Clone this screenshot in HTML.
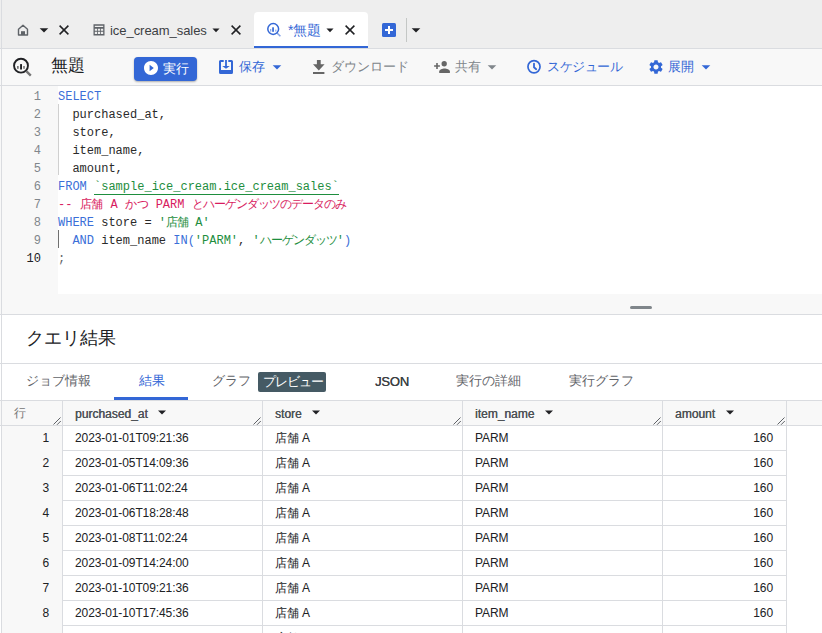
<!DOCTYPE html>
<html><head><meta charset="utf-8">
<style>
*{margin:0;padding:0;box-sizing:border-box}
html,body{width:822px;height:633px;overflow:hidden;background:#fff;font-family:"Liberation Sans",sans-serif;color:#202124}
.a{position:absolute}
svg{display:block}
#tabbar{left:0;top:0;width:822px;height:49px;background:#eeeeee;border-bottom:1px solid #dadce0}
#lb{left:1px;top:0;width:1px;height:633px;background:#dadce0;z-index:50}
.t{font-size:14px;white-space:nowrap;line-height:16px}
#toolbar{left:0;top:49px;width:822px;height:37px;background:#f8f8f8;border-bottom:1px solid #dadce0}
#gutter{left:0;top:86px;width:58px;height:208px;background:#f8f8f8}
#code{left:58px;top:86px;width:764px;height:208px;background:#fff}
#split{left:0;top:294px;width:822px;height:21px;background:#f8f8f8;border-bottom:1px solid #dadce0}
.ln{position:absolute;left:0;width:41px;text-align:right;font-family:"Liberation Mono",monospace;font-size:12px;line-height:18px;color:#80868b}
.cl{position:absolute;left:58px;font-family:"Liberation Mono",monospace;font-size:12px;line-height:18px;white-space:pre;color:#2a2a2a}
.cj{letter-spacing:-1px}.cj2{letter-spacing:-0.2px}
.kw{color:#3b6fd8}.str{color:#1e8e3e}.cm{color:#d81b60}.pn{color:#5f6368}
.hd{position:absolute;top:400px;height:26px;background:#f8f8f8;border-top:1px solid #dadce0;border-bottom:1px solid #dadce0}
.vs{position:absolute;top:400px;width:1px;height:26px;background:#dadce0}
.hc{position:absolute;top:400px;height:24px;font-size:12px;color:#4d5156;line-height:24px;text-shadow:0.35px 0 0 #4d5156}
.row{position:absolute;left:1px;width:786px;height:25px;border-bottom:1px solid #dadce0}
.c{position:absolute;top:0;height:25px;border-right:1px solid #dadce0;font-size:12px;line-height:24px;color:#202124;white-space:nowrap;letter-spacing:-0.1px}
</style></head><body>
<div id="lb" class="a"></div>
<div id="tabbar" class="a"></div>
<!-- home tab -->
<svg class="a" style="left:17px;top:24px" width="12" height="12" viewBox="0 0 12 12"><path d="M1.5 11V5.2L6 1.2l4.5 4V11z" fill="none" stroke="#5f6368" stroke-width="1.4" stroke-linejoin="round"/><rect x="4" y="7.2" width="4" height="3.8" fill="#5f6368"/></svg>
<svg class="a" style="left:38px;top:22px" width="12" height="16" viewBox="5 4 14 16"><path fill="#202124" d="M7 10l5 5 5-5z"/></svg>
<svg class="a" style="left:59px;top:25px" width="10" height="10" viewBox="0 0 10 10"><path d="M.6 .6L9.4 9.4M9.4 .6L.6 9.4" stroke="#202124" stroke-width="1.5"/></svg>
<!-- ice cream tab -->
<svg class="a" style="left:93px;top:24px" width="12" height="12" viewBox="0 0 12 12"><path fill="#5f6368" d="M.5 .3h11v11.2H.5zM1.8 1.8v1.3h8.4V1.8zM1.8 4.8v1.9h2.3V4.8zm3.1 0v1.9h2.2V4.8zm3 0v1.9h2.3V4.8zM1.8 7.7v2.2h2.3V7.7zm3.1 0v2.2h2.2V7.7zm3 0v2.2h2.3V7.7z"/></svg>
<div class="a t" style="left:110px;top:23px;color:#3c4043;font-size:13px;letter-spacing:-0.05px">ice_cream_sales</div>
<svg class="a" style="left:211px;top:22px" width="10" height="16" viewBox="5 4 14 16"><path fill="#202124" d="M7 10l5 5 5-5z"/></svg>
<svg class="a" style="left:231px;top:25px" width="10" height="10" viewBox="0 0 10 10"><path d="M.6 .6L9.4 9.4M9.4 .6L.6 9.4" stroke="#202124" stroke-width="1.5"/></svg>
<!-- active tab -->
<div class="a" style="left:254px;top:12px;width:114px;height:36px;background:#fff;border-radius:4px 4px 0 0"></div>
<div class="a" style="left:254px;top:46px;width:114px;height:2px;background:#3367d6"></div>
<svg class="a" style="left:266px;top:22px" width="16" height="16" viewBox="0 0 16 16"><circle cx="7.2" cy="7" r="5.4" fill="none" stroke="#3367d6" stroke-width="1.5"/><path d="M11 11l3.4 3.3" stroke="#3367d6" stroke-opacity=".6" stroke-width="1.6"/><rect x="6.2" y="5.3" width="1.7" height="4.5" fill="#3367d6"/><rect x="4" y="7" width="1.3" height="2.6" fill="#3367d6" fill-opacity=".55"/><rect x="9.2" y="7.6" width="1.2" height="2" fill="#3367d6" fill-opacity=".55"/></svg>
<div class="a t" style="left:288px;top:22px;color:#3367d6">*無題</div>
<svg class="a" style="left:325px;top:22px" width="10" height="16" viewBox="5 4 14 16"><path fill="#202124" d="M7 10l5 5 5-5z"/></svg>
<svg class="a" style="left:345px;top:25px" width="10" height="10" viewBox="0 0 10 10"><path d="M.6 .6L9.4 9.4M9.4 .6L.6 9.4" stroke="#202124" stroke-width="1.5"/></svg>
<!-- plus -->
<svg class="a" style="left:382px;top:23px" width="14" height="14" viewBox="0 0 14 14"><rect width="14" height="14" rx="1.5" fill="#3367d6"/><path d="M6 3h2v3h3v2H8v3H6V8H3V6h3z" fill="#fff"/></svg>
<div class="a" style="left:406px;top:18px;width:1px;height:24px;background:#c4c7c5"></div>
<svg class="a" style="left:410px;top:22px" width="12" height="16" viewBox="5 4 14 16"><path fill="#202124" d="M7 10l5 5 5-5z"/></svg>

<!-- toolbar -->
<div id="toolbar" class="a"></div>
<svg class="a" style="left:8px;top:52px" width="32" height="30" viewBox="0 0 32 30"><circle cx="13" cy="13.65" r="6.95" fill="none" stroke="#202124" stroke-width="1.9"/><path d="M18.3 19.1L22.8 23.6" stroke="#757575" stroke-width="2.4"/><rect x="12.1" y="12.1" width="1.9" height="5.4" fill="#202124"/><rect x="9" y="14" width="1.7" height="2.8" fill="#777"/><rect x="15.2" y="14" width="1.6" height="2.8" fill="#777"/></svg>
<div class="a" style="left:51px;top:56px;font-size:17px;line-height:20px;color:#202124">無題</div>
<div class="a" style="left:134px;top:57px;width:63px;height:24px;background:#3367d6;border-radius:4px;box-shadow:0 1px 2px rgba(0,0,0,.3)"></div>
<svg class="a" style="left:144px;top:61px" width="14" height="14" viewBox="2 2 20 20"><path fill="#fff" d="M12 2C6.48 2 2 6.48 2 12s4.48 10 10 10 10-4.48 10-10S17.52 2 12 2zm-2 14.5v-9l6 4.5-6 4.5z"/></svg>
<div class="a t" style="left:163px;top:61px;color:#fff;font-size:13px">実行</div>
<svg class="a" style="left:219px;top:60px" width="14" height="14" viewBox="0 0 14 14"><path fill="#3367d6" d="M0 1.5Q0 0 1.5 0H4.7V2H2V10H12V2H9.3V0H12.5Q14 0 14 1.5V12.5Q14 14 12.5 14H1.5Q0 14 0 12.5Z"/><path fill="#3367d6" d="M6.1 0h1.8v6h2.9L7 8.8 3.2 6h2.9z"/></svg>
<div class="a t" style="left:239px;top:59px;color:#3367d6;font-size:13px">保存</div>
<svg class="a" style="left:271px;top:59px" width="12" height="16" viewBox="5 4 14 16"><path fill="#3367d6" d="M7 10l5 5 5-5z"/></svg>
<svg class="a" style="left:313px;top:60px" width="12" height="14" viewBox="0 0 12 14"><path fill="#666" d="M3.9 0h3.8v4.3h3.9L5.8 10.5 0 4.3h3.9zM0 12.1h11.4v1.8H0z"/></svg>
<div class="a t" style="left:331px;top:59px;color:#80868b;font-size:13px">ダウンロード</div>
<svg class="a" style="left:433px;top:60px" width="17" height="14" viewBox="0 0 17 14"><path fill="#666" d="M3.2 3.1h1.6v2.1h2.1v1.6H4.8v2.1H3.2V6.8H1.1V5.2h2.1z"/><circle cx="11.2" cy="3.75" r="2.65" fill="#666"/><path fill="#666" d="M6.2 13V11.6C6.2 9.6 9.5 8.6 11.55 8.6S16.9 9.6 16.9 11.6V13Z"/></svg>
<div class="a t" style="left:455px;top:59px;color:#80868b;font-size:13px">共有</div>
<svg class="a" style="left:486px;top:59px" width="12" height="16" viewBox="5 4 14 16"><path fill="#80868b" d="M7 10l5 5 5-5z"/></svg>
<svg class="a" style="left:526px;top:59px" width="16" height="16" viewBox="0 0 16 16"><circle cx="8" cy="7.75" r="6.05" fill="none" stroke="#3367d6" stroke-width="1.7"/><path d="M8 4.6V8.3L10.2 10.2" fill="none" stroke="#3367d6" stroke-width="1.8" stroke-linecap="round"/></svg>
<div class="a t" style="left:547px;top:59px;color:#3367d6;font-size:13px;letter-spacing:-0.5px">スケジュール</div>
<svg class="a" style="left:649px;top:60px" width="14" height="14" viewBox="2 2 20 20"><path fill="#3367d6" d="M19.14 12.94c.04-.3.06-.61.06-.94 0-.32-.02-.64-.07-.94l2.03-1.58c.18-.14.23-.41.12-.61l-1.920-3.32c-.12-.22-.37-.29-.59-.22l-2.39.96c-.5-.38-1.03-.7-1.62-.94l-.36-2.54c-.04-.24-.24-.41-.48-.41h-3.84c-.24 0-.43.17-.47.41l-.36 2.54c-.59.24-1.13.57-1.62.94l-2.39-.96c-.22-.08-.47 0-.59.22L2.74 8.87c-.12.21-.08.47.12.61l2.03 1.58c-.05.3-.09.63-.09.94s.02.64.07.94l-2.03 1.58c-.18.14-.23.41-.12.61l1.92 3.32c.12.22.37.29.59.22l2.39-.96c.5.38 1.03.7 1.62.94l.36 2.540c.05.24.24.41.48.41h3.840c.24 0 .44-.17.47-.41l.36-2.54c.59-.24 1.13-.56 1.62-.94l2.39.96c.22.08.47 0 .59-.22l1.92-3.32c.12-.22.07-.47-.12-.61l-2.01-1.58zM12 15.6c-1.98 0-3.6-1.62-3.6-3.6s1.62-3.6 3.6-3.6 3.6 1.62 3.6 3.6-1.62 3.6-3.6 3.6z"/></svg>
<div class="a t" style="left:668px;top:59px;color:#3367d6;font-size:13px">展開</div>
<svg class="a" style="left:700px;top:59px" width="12" height="16" viewBox="5 4 14 16"><path fill="#3367d6" d="M7 10l5 5 5-5z"/></svg>

<!-- editor -->
<div id="gutter" class="a"></div>
<div id="code" class="a"></div>
<div class="a" style="left:0;top:88px;width:822px;height:200px">
<div class="ln" style="top:0">1</div>
<div class="ln" style="top:18px">2</div>
<div class="ln" style="top:36px">3</div>
<div class="ln" style="top:54px">4</div>
<div class="ln" style="top:72px">5</div>
<div class="ln" style="top:90px">6</div>
<div class="ln" style="top:108px">7</div>
<div class="ln" style="top:126px">8</div>
<div class="ln" style="top:144px">9</div>
<div class="ln" style="top:162px;color:#202124">10</div>
<div class="a" style="left:58px;top:16px;width:1px;height:71px;background:#d0d0d0"></div>
<div class="a" style="left:58px;top:142px;width:1px;height:18px;background:#707070"></div>
<div class="cl" style="top:0"><span class="kw">SELECT</span></div>
<div class="cl" style="top:18px">  purchased_at,</div>
<div class="cl" style="top:36px">  store,</div>
<div class="cl" style="top:54px">  item_name,</div>
<div class="cl" style="top:72px">  amount,</div>
<div class="cl" style="top:90px"><span class="kw">FROM</span> <span class="str" style="border-bottom:1px solid #1e8e3e">`sample_ice_cream.ice_cream_sales`</span></div>
<div class="cl cm" style="top:108px">-- <span class="cj2">店舗</span> A <span class="cj2">かつ</span> PARM <span class="cj">とハーゲンダッツのデータのみ</span></div>
<div class="cl" style="top:126px"><span class="kw">WHERE</span> store = <span class="str">'<span class="cj">店舗</span> A'</span></div>
<div class="cl" style="top:144px">  <span class="kw">AND</span> item_name <span class="kw">IN(</span><span class="str">'PARM'</span>, <span class="str">'<span class="cj">ハーゲンダッツ</span>'</span><span class="kw">)</span></div>
<div class="cl pn" style="top:162px">;</div>
</div>
<div id="split" class="a"></div>
<div class="a" style="left:630px;top:306px;width:22px;height:3px;border-radius:2px;background:#80868b"></div>

<!-- results -->
<div class="a" style="left:26px;top:327px;font-size:18px;line-height:22px;color:#202124">クエリ結果</div>
<div class="a" style="left:0;top:363px;width:822px;height:1px;background:#dadce0"></div>
<div class="a t" style="left:26px;top:373px;color:#5f6368;font-size:13px">ジョブ情報</div>
<div class="a t" style="left:139px;top:373px;color:#3367d6;font-size:13px">結果</div>
<div class="a" style="left:114px;top:397px;width:74px;height:3px;background:#3367d6"></div>
<div class="a t" style="left:212px;top:373px;color:#5f6368;font-size:13px">グラフ</div>
<div class="a" style="left:258px;top:372px;width:68px;height:20px;background:#455a64;border-radius:2px"></div>
<div class="a t" style="left:263px;top:374px;color:#fff;font-size:13px;letter-spacing:-1px">プレビュー</div>
<div class="a t" style="left:375px;top:374px;color:#3c4043;font-size:13px;letter-spacing:-0.2px;text-shadow:0.2px 0 0 #3c4043">JSON</div>
<div class="a t" style="left:456px;top:373px;color:#5f6368;font-size:13px">実行の詳細</div>
<div class="a t" style="left:569px;top:373px;color:#5f6368;font-size:13px">実行グラフ</div>

<!-- table -->
<div class="hd" style="left:0;width:822px"></div>
<div class="hc" style="left:1px;width:62px;padding-left:13px;font-weight:normal;color:#757575;top:401px;text-shadow:none">行</div>
<div class="hc" style="left:63px;width:200px;padding-left:12px;top:402px;letter-spacing:0px">purchased_at</div>
<div class="hc" style="left:263px;width:200px;padding-left:12px;top:402px;letter-spacing:0px">store</div>
<div class="hc" style="left:463px;width:200px;padding-left:12px;top:402px;letter-spacing:0px">item_name</div>
<div class="hc" style="left:663px;width:124px;padding-left:12px;top:402px;letter-spacing:0px">amount</div>
<svg class="a" style="left:158px;top:410px" width="8" height="5" viewBox="0 0 8 5"><path d="M0 .5h8L4 4.5z" fill="#202124"/></svg>
<svg class="a" style="left:312px;top:410px" width="8" height="5" viewBox="0 0 8 5"><path d="M0 .5h8L4 4.5z" fill="#202124"/></svg>
<svg class="a" style="left:545px;top:410px" width="8" height="5" viewBox="0 0 8 5"><path d="M0 .5h8L4 4.5z" fill="#202124"/></svg>
<svg class="a" style="left:726px;top:410px" width="8" height="5" viewBox="0 0 8 5"><path d="M0 .5h8L4 4.5z" fill="#202124"/></svg>
<svg class="a" style="left:53px;top:417px" width="8" height="8" viewBox="0 0 8 8"><path d="M.5 7.5l7-7M4 7.8l3.8-3.8" stroke="#5f6368" stroke-width="1"/></svg>
<svg class="a" style="left:253px;top:417px" width="8" height="8" viewBox="0 0 8 8"><path d="M.5 7.5l7-7M4 7.8l3.8-3.8" stroke="#5f6368" stroke-width="1"/></svg>
<svg class="a" style="left:453px;top:417px" width="8" height="8" viewBox="0 0 8 8"><path d="M.5 7.5l7-7M4 7.8l3.8-3.8" stroke="#5f6368" stroke-width="1"/></svg>
<svg class="a" style="left:653px;top:417px" width="8" height="8" viewBox="0 0 8 8"><path d="M.5 7.5l7-7M4 7.8l3.8-3.8" stroke="#5f6368" stroke-width="1"/></svg>
<svg class="a" style="left:777px;top:417px" width="8" height="8" viewBox="0 0 8 8"><path d="M.5 7.5l7-7M4 7.8l3.8-3.8" stroke="#5f6368" stroke-width="1"/></svg>
<div class="vs" style="left:62px"></div><div class="vs" style="left:262px"></div><div class="vs" style="left:462px"></div><div class="vs" style="left:662px"></div><div class="vs" style="left:786px"></div>
<div class="row" style="top:426px"><div class="c" style="left:0;width:62px;text-align:right;padding-right:13px;background:#f8f8f8">1</div><div class="c" style="left:62px;width:200px;padding-left:12px">2023-01-01T09:21:36</div><div class="c" style="left:262px;width:200px;padding-left:12px">店舗 A</div><div class="c" style="left:462px;width:200px;padding-left:12px">PARM</div><div class="c" style="left:662px;width:124px;text-align:right;padding-right:13px">160</div></div>
<div class="row" style="top:451px"><div class="c" style="left:0;width:62px;text-align:right;padding-right:13px;background:#f8f8f8">2</div><div class="c" style="left:62px;width:200px;padding-left:12px">2023-01-05T14:09:36</div><div class="c" style="left:262px;width:200px;padding-left:12px">店舗 A</div><div class="c" style="left:462px;width:200px;padding-left:12px">PARM</div><div class="c" style="left:662px;width:124px;text-align:right;padding-right:13px">160</div></div>
<div class="row" style="top:476px"><div class="c" style="left:0;width:62px;text-align:right;padding-right:13px;background:#f8f8f8">3</div><div class="c" style="left:62px;width:200px;padding-left:12px">2023-01-06T11:02:24</div><div class="c" style="left:262px;width:200px;padding-left:12px">店舗 A</div><div class="c" style="left:462px;width:200px;padding-left:12px">PARM</div><div class="c" style="left:662px;width:124px;text-align:right;padding-right:13px">160</div></div>
<div class="row" style="top:501px"><div class="c" style="left:0;width:62px;text-align:right;padding-right:13px;background:#f8f8f8">4</div><div class="c" style="left:62px;width:200px;padding-left:12px">2023-01-06T18:28:48</div><div class="c" style="left:262px;width:200px;padding-left:12px">店舗 A</div><div class="c" style="left:462px;width:200px;padding-left:12px">PARM</div><div class="c" style="left:662px;width:124px;text-align:right;padding-right:13px">160</div></div>
<div class="row" style="top:526px"><div class="c" style="left:0;width:62px;text-align:right;padding-right:13px;background:#f8f8f8">5</div><div class="c" style="left:62px;width:200px;padding-left:12px">2023-01-08T11:02:24</div><div class="c" style="left:262px;width:200px;padding-left:12px">店舗 A</div><div class="c" style="left:462px;width:200px;padding-left:12px">PARM</div><div class="c" style="left:662px;width:124px;text-align:right;padding-right:13px">160</div></div>
<div class="row" style="top:551px"><div class="c" style="left:0;width:62px;text-align:right;padding-right:13px;background:#f8f8f8">6</div><div class="c" style="left:62px;width:200px;padding-left:12px">2023-01-09T14:24:00</div><div class="c" style="left:262px;width:200px;padding-left:12px">店舗 A</div><div class="c" style="left:462px;width:200px;padding-left:12px">PARM</div><div class="c" style="left:662px;width:124px;text-align:right;padding-right:13px">160</div></div>
<div class="row" style="top:576px"><div class="c" style="left:0;width:62px;text-align:right;padding-right:13px;background:#f8f8f8">7</div><div class="c" style="left:62px;width:200px;padding-left:12px">2023-01-10T09:21:36</div><div class="c" style="left:262px;width:200px;padding-left:12px">店舗 A</div><div class="c" style="left:462px;width:200px;padding-left:12px">PARM</div><div class="c" style="left:662px;width:124px;text-align:right;padding-right:13px">160</div></div>
<div class="row" style="top:601px"><div class="c" style="left:0;width:62px;text-align:right;padding-right:13px;background:#f8f8f8">8</div><div class="c" style="left:62px;width:200px;padding-left:12px">2023-01-10T17:45:36</div><div class="c" style="left:262px;width:200px;padding-left:12px">店舗 A</div><div class="c" style="left:462px;width:200px;padding-left:12px">PARM</div><div class="c" style="left:662px;width:124px;text-align:right;padding-right:13px">160</div></div>
<div class="row" style="top:626px"><div class="c" style="left:0;width:62px;background:#f8f8f8"></div><div class="c" style="left:62px;width:200px"></div><div class="c" style="left:262px;width:200px;padding-left:12px">店舗 A</div><div class="c" style="left:462px;width:200px"></div><div class="c" style="left:662px;width:124px"></div></div>
</body></html>
